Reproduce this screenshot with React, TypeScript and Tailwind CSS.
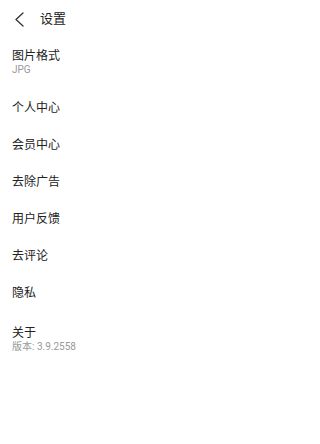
import React from "react";

const items: { title: string; sub?: string }[] = [
  { title: "图片格式", sub: "JPG" },
  { title: "个人中心" },
  { title: "会员中心" },
  { title: "去除广告" },
  { title: "用户反馈" },
  { title: "去评论" },
  { title: "隐私" },
  { title: "关于", sub: "版本: 3.9.2558" },
];

const font = { fontFamily: '"Roboto", "Noto Sans CJK SC", sans-serif' };

export default function App() {
  return (
    <div className="w-[250px] h-[444px] bg-white text-[#222]" style={font}>
      {/* Header */}
      <div className="h-9 flex items-center pl-[14px]">
        <svg width="11" height="15" viewBox="0 0 11 15" fill="none" className="mt-[2px]">
          <path d="M9 1 L2 7.5 L9 14" stroke="#333" strokeWidth="1.3" strokeLinecap="round" strokeLinejoin="round" />
        </svg>
        <span className="ml-[15px] text-[13px] leading-none">设置</span>
      </div>

      {/* List */}
      <div className="flex flex-col">
        {items.map((it) => (
          <div
            key={it.title}
            className={`flex flex-col justify-center px-3 ${it.sub ? "h-[53.7px]" : "h-[37.1px]"}`}
          >
            <span className="text-[12px] leading-[15px] text-[#222]">{it.title}</span>
            {it.sub && <span className="text-[10px] leading-[12px] text-[#999]">{it.sub}</span>}
          </div>
        ))}
      </div>
    </div>
  );
}
